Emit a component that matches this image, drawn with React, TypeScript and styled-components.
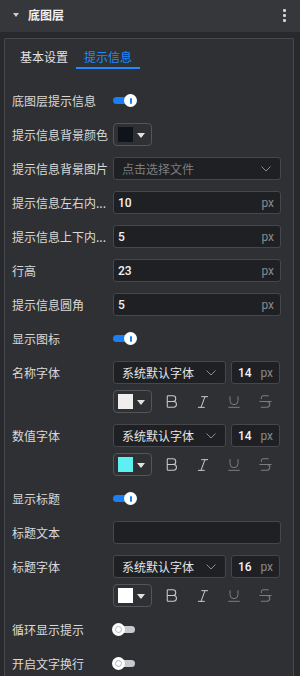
import React from 'react'
import styled, { createGlobalStyle } from 'styled-components'
import { Bold, Italic, Underline, Strikethrough } from 'lucide-react'

const GlobalStyle = createGlobalStyle`
  html, body {
    margin: 0;
    padding: 0;
    background: #28292d;
  }
  body {
    font-family: "Noto Sans CJK SC", "Noto Sans", sans-serif;
    -webkit-font-smoothing: antialiased;
  }
  * {
    box-sizing: border-box;
  }
`

const Page = styled.div`
  width: 300px;
  height: 676px;
  overflow: hidden;
  background: #28292d;
`

const Header = styled.div`
  height: 32px;
  background: #36373b;
  display: flex;
  align-items: center;
  padding: 0 14px 2px 13px;
`

const Caret = styled.span`
  width: 0;
  height: 0;
  border-left: 3.5px solid transparent;
  border-right: 3.5px solid transparent;
  border-top: 4px solid #cfcfcf;
  margin-right: 9px;
`

const Title = styled.div`
  flex: 1;
  color: #f0f0f0;
  font-size: 12px;
  font-weight: bold;
  line-height: 16px;
`

const MoreBtn = styled.div`
  display: flex;
  flex-direction: column;
  gap: 2px;
  padding-top: 1px;
`

const Dot = styled.span`
  width: 3px;
  height: 3px;
  border-radius: 1px;
  background: #d2d2d2;
`

const Body = styled.div`
  padding: 6px 6px 0 4px;
`

const Panel = styled.div`
  height: 650px;
  background: #2f3034;
  border: 1px solid #48494e;
  border-bottom: none;
  border-radius: 2px 2px 0 0;
  padding: 0 12px 0 7px;
`

const Tabs = styled.div`
  display: flex;
`

const Tab = styled.div<{ $active?: boolean }>`
  width: 64px;
  height: 30px;
  padding-top: 8px;
  text-align: center;
  font-size: 12px;
  line-height: 20px;
  color: ${p => (p.$active ? '#1c8cff' : '#e2e2e2')};
  border-bottom: 2px solid ${p => (p.$active ? '#1c8cff' : 'transparent')};
`

const Form = styled.div`
  padding-top: 20px;
  display: flex;
  flex-direction: column;
  gap: 11px;
`

const Row = styled.div`
  display: flex;
  align-items: flex-start;
`

const Label = styled.div`
  width: 101px;
  flex-shrink: 0;
  height: 23px;
  line-height: 23px;
  font-size: 12px;
  color: #d9d9d9;
  white-space: nowrap;
  overflow: hidden;
`

const Control = styled.div`
  flex: 1;
  display: flex;
  flex-direction: column;
  gap: 6px;
  min-width: 0;
`

const Line = styled.div`
  display: flex;
  align-items: center;
  gap: 0;
  height: 23px;
`

const Field = styled.div<{ $width?: number; $pl?: number; $ml?: number }>`
  ${p => (p.$width ? `width: ${p.$width}px; flex-shrink: 0;` : 'flex: 1;')}
  margin-left: ${p => p.$ml ?? 0}px;
  height: 23px;
  display: flex;
  align-items: center;
  background: #1f2023;
  border: 1px solid #46474c;
  border-radius: 3px;
  padding: 0 6px 0 ${p => p.$pl ?? 4}px;
`

const Value = styled.span`
  flex: 1;
  color: #f2f2f2;
  font-family: Roboto, "Noto Sans", sans-serif;
  font-size: 12px;
  font-weight: 500;
`

const Unit = styled.span`
  color: #8a8a8a;
  font-family: Roboto, "Noto Sans", sans-serif;
  font-size: 12px;
`

const SelectText = styled.span<{ $placeholder?: boolean }>`
  flex: 1;
  font-size: 12px;
  color: ${p => (p.$placeholder ? '#7d7d7f' : '#e4e4e4')};
  padding-left: 2px;
  white-space: nowrap;
`

const Chevron = styled.svg`
  width: 10px;
  height: 6px;
  margin-right: 3px;
`

const ColorBox = styled.div`
  width: 39px;
  height: 23px;
  flex-shrink: 0;
  display: flex;
  align-items: center;
  gap: 4px;
  padding-left: 4px;
  border: 1px solid #54555a;
  border-radius: 4px;
`

const Swatch = styled.span<{ $color: string }>`
  width: 15px;
  height: 15px;
  background: ${p => p.$color};
`

const SwatchCaret = styled.span`
  width: 0;
  height: 0;
  border-left: 4px solid transparent;
  border-right: 4px solid transparent;
  border-top: 5px solid #e2e2e2;
  margin-top: 1px;
`

const IconBtn = styled.span<{ $dim?: boolean }>`
  width: 32px;
  display: flex;
  justify-content: center;
  align-items: center;
  color: ${p => (p.$dim ? '#7b7c80' : '#c9c9c9')};
  &:first-of-type {
    margin-left: 4px;
  }
`

const Switch = styled.span<{ $on?: boolean }>`
  position: relative;
  display: block;
  width: 24px;
  height: 23px;
  &::before {
    content: '';
    position: absolute;
    top: 8px;
    left: ${p => (p.$on ? '0' : '6px')};
    width: 16px;
    height: 7px;
    border-radius: 4px;
    background: ${p => (p.$on ? '#1a7ff5' : '#c6c9cf')};
  }
`

const Knob = styled.span<{ $on?: boolean }>`
  position: absolute;
  top: 5px;
  left: ${p => (p.$on ? '11px' : '-1px')};
  width: 13px;
  height: 13px;
  border-radius: 50%;
  background: #ffffff;
  display: flex;
  align-items: center;
  justify-content: center;
  &::after {
    content: '';
    display: block;
    ${p =>
      p.$on
        ? 'width: 2px; height: 6px; border-radius: 1px; background: #1a7ff5;'
        : 'width: 5px; height: 5px; border-radius: 50%; border: 1px solid #b8b8b8;'}
  }
`

function ChevronDown() {
  return (
    <Chevron viewBox="0 0 10 6">
      <path d="M0.5 0.5 L5 5 L9.5 0.5" fill="none" stroke="#8c8c8c" strokeWidth="1" />
    </Chevron>
  )
}

function Toggle({ on }: { on?: boolean }) {
  return (
    <Switch $on={on}>
      <Knob $on={on} />
    </Switch>
  )
}

function NumberInput({
  value,
  width,
  pl,
  ml,
}: {
  value: string
  width?: number
  pl?: number
  ml?: number
}) {
  return (
    <Field $width={width} $pl={pl} $ml={ml}>
      <Value>{value}</Value>
      <Unit>px</Unit>
    </Field>
  )
}

function ColorPicker({ color }: { color: string }) {
  return (
    <ColorBox>
      <Swatch $color={color} />
      <SwatchCaret />
    </ColorBox>
  )
}

function FontControl({ size, color }: { size: string; color: string }) {
  return (
    <Control>
      <Line>
        <Field $width={113} $pl={6}>
          <SelectText>系统默认字体</SelectText>
          <ChevronDown />
        </Field>
        <NumberInput value={size} width={49} pl={6} ml={5} />
      </Line>
      <Line>
        <ColorPicker color={color} />
        <IconBtn>
          <Bold size={17} strokeWidth={1.5} />
        </IconBtn>
        <IconBtn>
          <Italic size={16} strokeWidth={1.5} />
        </IconBtn>
        <IconBtn $dim>
          <Underline size={16} strokeWidth={1.5} />
        </IconBtn>
        <IconBtn $dim>
          <Strikethrough size={17} strokeWidth={1.5} />
        </IconBtn>
      </Line>
    </Control>
  )
}

function Item({ label, children }: { label: string; children: React.ReactNode }) {
  return (
    <Row>
      <Label>{label}</Label>
      {children}
    </Row>
  )
}

export default function App() {
  return (
    <Page>
      <GlobalStyle />
      <Header>
        <Caret />
        <Title>底图层</Title>
        <MoreBtn>
          <Dot />
          <Dot />
          <Dot />
        </MoreBtn>
      </Header>
      <Body>
        <Panel>
          <Tabs>
            <Tab>基本设置</Tab>
            <Tab $active>提示信息</Tab>
          </Tabs>
          <Form>
            <Item label="底图层提示信息">
              <Toggle on />
            </Item>
            <Item label="提示信息背景颜色">
              <ColorPicker color="#0f141b" />
            </Item>
            <Item label="提示信息背景图片">
              <Field $pl={6}>
                <SelectText $placeholder>点击选择文件</SelectText>
                <ChevronDown />
              </Field>
            </Item>
            <Item label="提示信息左右内...">
              <NumberInput value="10" />
            </Item>
            <Item label="提示信息上下内...">
              <NumberInput value="5" />
            </Item>
            <Item label="行高">
              <NumberInput value="23" />
            </Item>
            <Item label="提示信息圆角">
              <NumberInput value="5" />
            </Item>
            <Item label="显示图标">
              <Toggle on />
            </Item>
            <Item label="名称字体">
              <FontControl size="14" color="#f0eded" />
            </Item>
            <Item label="数值字体">
              <FontControl size="14" color="#5cf0f2" />
            </Item>
            <Item label="显示标题">
              <Toggle on />
            </Item>
            <Item label="标题文本">
              <Field />
            </Item>
            <Item label="标题字体">
              <FontControl size="16" color="#ffffff" />
            </Item>
            <Item label="循环显示提示">
              <Toggle />
            </Item>
            <Item label="开启文字换行">
              <Toggle />
            </Item>
          </Form>
        </Panel>
      </Body>
    </Page>
  )
}
